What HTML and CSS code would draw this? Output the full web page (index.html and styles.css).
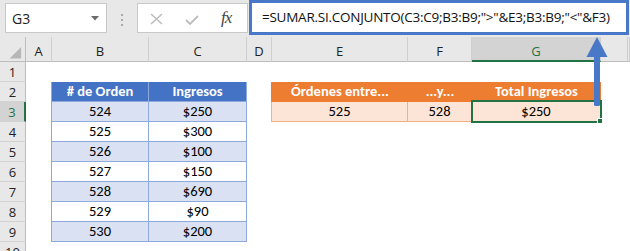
FILE: index.html
```html
<!DOCTYPE html>
<html lang="es">
<head>
<meta charset="utf-8">
<title>SUMAR.SI.CONJUNTO</title>
<link rel="stylesheet" href="styles.css">
</head>
<body>
<div class="app">
  <div class="fbar">
    <div class="namebox"><span>G3</span><svg class="dd" width="8" height="5" viewBox="0 0 8 5"><polygon points="0,0 8,0 4,4.5" fill="#6b6b6b"/></svg></div>
    <div class="grip"><i></i><i></i><i></i></div>
    <div class="fxbox">
      <svg class="cancel" width="13" height="12" viewBox="0 0 13 12"><path d="M1 1 L12 11 M12 1 L1 11" stroke="#bdbdbd" stroke-width="1.6" fill="none"/></svg>
      <svg class="enter" width="14" height="10" viewBox="0 0 14 10"><path d="M1 5 L5 9 L13 1" stroke="#bdbdbd" stroke-width="1.8" fill="none"/></svg>
      <span class="fx">fx</span>
    </div>
    <div class="formula">=SUMAR.SI.CONJUNTO(C3:C9;B3:B9;"&gt;"&amp;E3;B3:B9;"&lt;"&amp;F3)</div>
  </div>
  <div class="sheet">
    <div class="ch corner"><svg width="26" height="24" viewBox="0 0 26 24"><polygon points="22,10 22,22 10,22" fill="#b7b7b7"/></svg></div>
    <div class="ch">A</div><div class="ch">B</div><div class="ch">C</div><div class="ch">D</div><div class="ch">E</div><div class="ch">F</div><div class="ch sel-h">G</div><div class="ch"></div><div class="ch"></div>

    <div class="rh">1</div><span></span><span></span><span></span><span></span><span></span><span></span><span></span><span></span><span></span>

    <div class="rh">2</div><span></span><div class="th first">#&nbsp;de Orden</div><div class="th">Ingresos</div><span></span><div class="oh ofirst">Órdenes entre...</div><div class="oh">...y...</div><div class="oh">Total Ingresos</div><span></span><span></span>

    <div class="rh sel-r">3</div><span></span><div class="tb alt first">524</div><div class="tb alt">$250</div><span></span><div class="od ofirst">525</div><div class="od">528</div><div class="od">$250</div><span></span><span></span>

    <div class="rh">4</div><span></span><div class="tb first">525</div><div class="tb">$300</div><span></span><span></span><span></span><span></span><span></span><span></span>

    <div class="rh">5</div><span></span><div class="tb alt first">526</div><div class="tb alt">$100</div><span></span><span></span><span></span><span></span><span></span><span></span>

    <div class="rh">6</div><span></span><div class="tb first">527</div><div class="tb">$150</div><span></span><span></span><span></span><span></span><span></span><span></span>

    <div class="rh">7</div><span></span><div class="tb alt first">528</div><div class="tb alt">$690</div><span></span><span></span><span></span><span></span><span></span><span></span>

    <div class="rh">8</div><span></span><div class="tb first">529</div><div class="tb">$90</div><span></span><span></span><span></span><span></span><span></span><span></span>

    <div class="rh">9</div><span></span><div class="tb alt first">530</div><div class="tb alt">$200</div><span></span><span></span><span></span><span></span><span></span><span></span>

    <div class="rh">10</div><span></span><span></span><span></span><span></span><span></span><span></span><span></span><span></span><span></span>
  </div>
  <div class="selection"></div>
  <div class="handle"></div>
  <svg class="arrow" width="22" height="72" viewBox="0 0 22 72"><polygon points="0.5,21 21.5,21 11,1" fill="#4a78c8"/><rect x="8" y="19" width="6" height="51" rx="1.5" fill="#4a78c8"/></svg>
</div>
</body>
</html>
```
FILE: styles.css
```css
* { box-sizing: border-box; margin: 0; padding: 0; }
body { margin: 0; background: #fff; font-family: "Open Sans", sans-serif; }
.app { position: relative; width: 630px; height: 251px; overflow: hidden; background: #fff; }

.fbar { display: flex; align-items: flex-start; height: 37px; background: #e8e8e8; padding-left: 5px; }
.namebox { margin-top: 3px; width: 102px; height: 30px; background: #fff; border: 1px solid #c8c8c8; display: flex; align-items: center; justify-content: space-between; padding: 0 7px 0 6px; font-size: 14px; color: #222; }
.grip { width: 30px; height: 37px; display: flex; flex-direction: column; align-items: center; justify-content: center; gap: 3px; padding-top: 3px; }
.grip i { display: block; width: 2px; height: 2px; background: #a8a8a8; }
.fxbox { margin-top: 3px; width: 111px; height: 30px; background: #fff; border: 1px solid #c8c8c8; display: flex; align-items: center; padding-left: 12px; }
.cancel { margin-top: 2px; }
.enter { margin-left: 22px; margin-top: 3px; }
.fx { margin-left: 22px; font-family: "Liberation Serif", serif; font-style: italic; font-size: 17px; color: #444; letter-spacing: -1px; }
.formula { margin-left: 1px; width: 380px; height: 35px; border: 3px solid #4a78c8; background: #fff; padding-left: 10px; font-size: 13.5px; letter-spacing: -0.25px; line-height: 28px; white-space: nowrap; color: #111; }

.sheet { display: grid; grid-template-columns: 26px 26px 97px 98px 25px 136px 64px 129px 27px 2px; grid-template-rows: 25px repeat(10, 20px); font-family: Carlito, Calibri, Lato, sans-serif; font-size: 14.5px; color: #000; }
.ch { background: #e8e8e8; border-right: 1px solid #cfcfcf; border-bottom: 1px solid #bdbdbd; display: flex; align-items: center; justify-content: center; padding-top: 4px; font-family: "Open Sans", sans-serif; font-size: 13px; color: #222; }
.corner { padding: 0; border-right-color: #bdbdbd; }
.sel-h { background: #d3d3d3; color: #217346; border-bottom: 2px solid #217346; }
.rh { background: #e8e8e8; border-right: 1px solid #bdbdbd; border-bottom: 1px solid #d2d2d2; display: flex; align-items: center; justify-content: center; font-family: "Open Sans", sans-serif; font-size: 13px; color: #222; }
.sel-r { background: #d3d3d3; color: #217346; border-right: 2px solid #217346; }

.th, .tb, .oh, .od { text-align: center; line-height: 19px; white-space: nowrap; }
.th { background: #4472c4; color: #fff; font-weight: 700; border-right: 1px solid #8ea9db; border-bottom: 1px solid #8ea9db; }
.tb { border-right: 1px solid #8ea9db; border-bottom: 1px solid #8ea9db; }
.alt { background: #d9e1f2; }
.first { box-shadow: -1px 0 0 #8ea9db; }
.oh { background: #ed7d31; color: #fff; font-weight: 700; }
.oh.ofirst { box-shadow: -1px 0 0 #ed7d31; }
.od { background: #fce4d6; border-right: 1px solid #f4b084; border-bottom: 1px solid #f4b084; }
.od.ofirst { box-shadow: -1px 0 0 #f4b084; }

.selection { position: absolute; left: 471px; top: 100px; width: 131px; height: 23px; border: 2px solid #217346; }
.handle { position: absolute; left: 597px; top: 118px; width: 6px; height: 6px; background: #217346; border: 1px solid #fff; }
.arrow { position: absolute; left: 586px; top: 36px; }
```
